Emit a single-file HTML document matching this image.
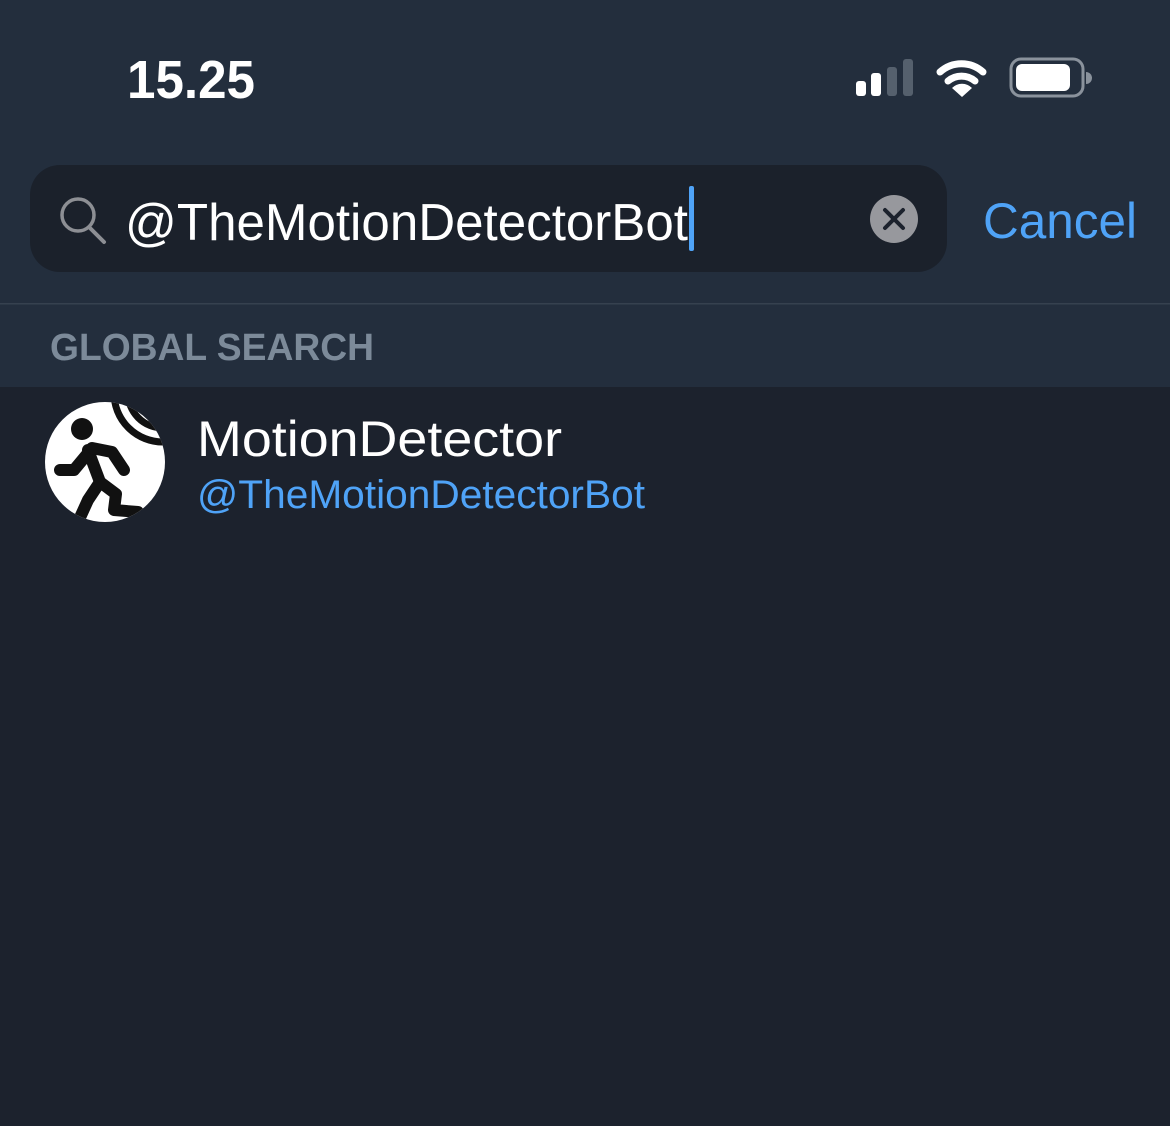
<!DOCTYPE html>
<html><head><meta charset="utf-8"><style>
html,body{margin:0;padding:0;background:#1c222d;}
svg{display:block}
text{font-family:"Liberation Sans",sans-serif}
</style></head><body>
<svg width="1170" height="1126" viewBox="0 0 1170 1126" xmlns="http://www.w3.org/2000/svg">
<rect x="0" y="0" width="1170" height="1126" fill="#1c222d"/>
<rect x="0" y="0" width="1170" height="387" fill="#232e3d"/>
<rect x="0" y="303" width="1170" height="1.5" fill="#36414f"/>
<text x="127" y="98" font-size="54" font-weight="600" fill="#fff" textLength="128" lengthAdjust="spacingAndGlyphs">15.25</text>
<rect x="856" y="81" width="10" height="15" rx="3" fill="#fff"/>
<rect x="871" y="73" width="10" height="23" rx="3" fill="#fff"/>
<rect x="887" y="67" width="10" height="29" rx="3" fill="#55606d"/>
<rect x="903" y="59" width="10" height="37" rx="3" fill="#55606d"/>
<g fill="none" stroke="#fff" stroke-width="7" stroke-linecap="round">
<path d="M940 72 A32 32 0 0 1 983 72"/>
<path d="M948 81 A21 21 0 0 1 975 81"/>
</g>
<path d="M952 88 L962 97 L972 88 A14 14 0 0 0 952 88Z" fill="#fff"/>
<rect x="1011" y="59" width="72" height="37" rx="10" fill="none" stroke="#8a929c" stroke-width="3"/>
<rect x="1016" y="64" width="54" height="27" rx="6" fill="#fff"/>
<path d="M1086 72 A6 6 0 0 1 1086 84Z" fill="#8a929c"/>
<rect x="30" y="165" width="917" height="107" rx="30" fill="#1b212b"/>
<circle cx="78" cy="215" r="16" fill="none" stroke="#8d8f94" stroke-width="3.5"/>
<line x1="90" y1="228" x2="104" y2="242" stroke="#8d8f94" stroke-width="4" stroke-linecap="round"/>
<text x="125" y="240" font-size="52" fill="#fff" textLength="563" lengthAdjust="spacingAndGlyphs">@TheMotionDetectorBot</text>
<rect x="689" y="186" width="5" height="65" rx="2" fill="#4fa3f7"/>
<circle cx="894" cy="219" r="24" fill="#97989d"/>
<g stroke="#1c222d" stroke-width="4" stroke-linecap="round"><line x1="885" y1="210" x2="903" y2="228"/><line x1="903" y1="210" x2="885" y2="228"/></g>
<text x="983" y="238" font-size="50" fill="#4fa3f7" textLength="154" lengthAdjust="spacingAndGlyphs">Cancel</text>
<text x="50" y="360" font-size="38" font-weight="bold" fill="#7c8a99" textLength="324" lengthAdjust="spacingAndGlyphs">GLOBAL SEARCH</text>
<defs><clipPath id="c"><circle cx="105" cy="462" r="60"/></clipPath></defs>
<circle cx="105" cy="462" r="60" fill="#fff"/>
<g clip-path="url(#c)">
<g fill="none" stroke="#111" stroke-width="7">
<circle cx="163" cy="393" r="22"/>
<circle cx="163" cy="393" r="35"/>
<circle cx="163" cy="393" r="49"/>
</g>
<circle cx="82" cy="429" r="11" fill="#111"/>
<g fill="none" stroke="#111" stroke-width="12" stroke-linecap="round" stroke-linejoin="round">
<path d="M88 450 L100 482"/>
<path d="M89 452 L74 470 L60 470"/>
<path d="M92 448 L112 452 L124 470"/>
<path d="M100 482 L88 500 L78 522"/>
<path d="M100 482 L116 494 L114 510 L138 512"/>
</g>
</g>
<text x="197" y="456" font-size="50" fill="#fff" textLength="365" lengthAdjust="spacingAndGlyphs">MotionDetector</text>
<text x="197" y="508" font-size="40" fill="#4fa3f7" textLength="448" lengthAdjust="spacingAndGlyphs">@TheMotionDetectorBot</text>
</svg>
</body></html>
